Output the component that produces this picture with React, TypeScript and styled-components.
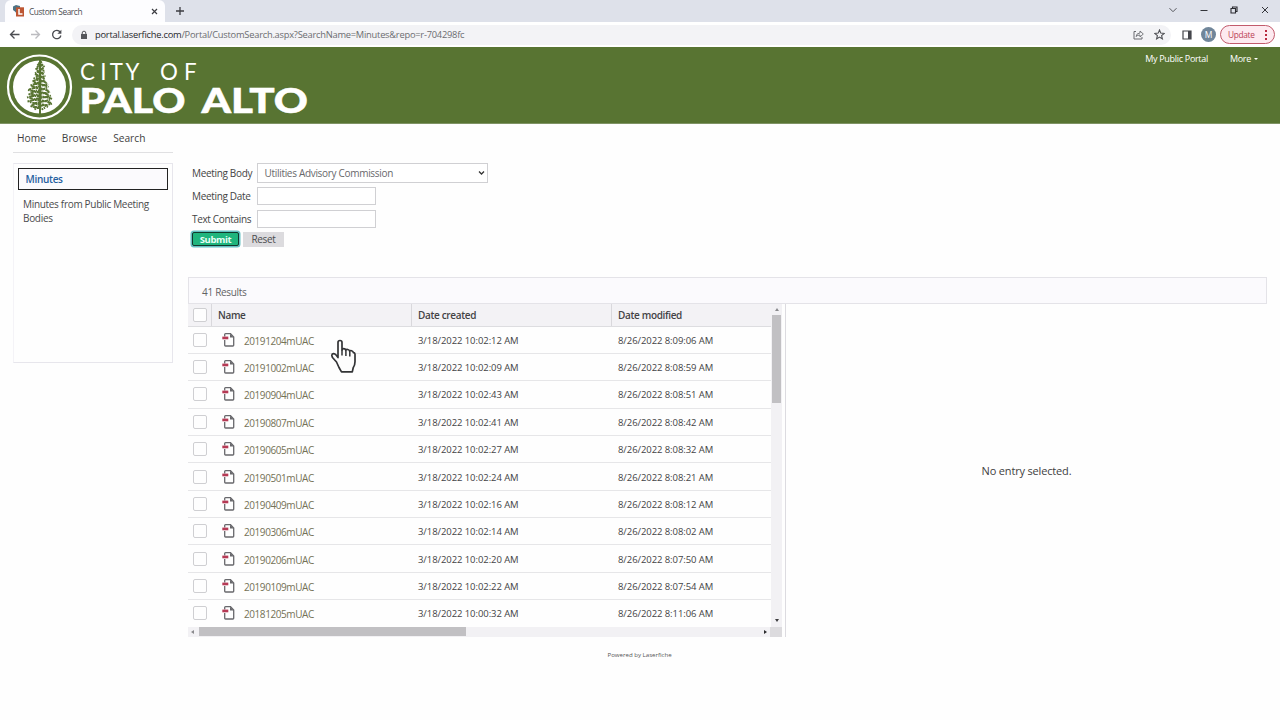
import React from "react";
import styled, { createGlobalStyle } from "styled-components";

const Global = createGlobalStyle`
  * { box-sizing: border-box; }
  body { margin: 0; background: #fefefe; font-family: "Open Sans", sans-serif; color: #444; overflow: hidden; }
  button, input, select { font-family: inherit; margin: 0; }
`;

const Page = styled.div`
  width: 1280px;
  height: 720px;
  display: flex;
  flex-direction: column;
  overflow: hidden;
`;

/* Browser chrome */
const TabStrip = styled.div`
  height: 22px;
  background: #dee1ea;
  display: flex;
  align-items: stretch;
  padding-left: 5px;
`;
const Tab = styled.div`
  width: 160px;
  background: #fdfdff;
  border-radius: 6px 6px 0 0;
  display: flex;
  align-items: center;
  padding: 0 7px 0 8px;
  font-size: 8.3px;
  letter-spacing: -0.4px;
  color: #4c4d52;
  & > span { margin-left: 4px; flex: 1; white-space: nowrap; }
`;
const NewTab = styled.div`
  width: 30px;
  display: flex;
  align-items: center;
  justify-content: center;
`;
const WindowControls = styled.div`
  margin-left: auto;
  display: flex;
  align-items: center;
  gap: 20.6px;
  padding: 0 10px 3px 0;
`;
const Toolbar = styled.div`
  height: 25px;
  background: #fff;
  display: flex;
  align-items: center;
  padding-left: 9px;
`;
const NavIcons = styled.div`
  display: flex;
  gap: 10px;
  width: 63px;
`;
const Omnibox = styled.div`
  width: 1099px;
  height: 20px;
  border-radius: 10px;
  background: #f3f3f6;
  display: flex;
  align-items: center;
  padding: 0 6px 0 8px;
`;
const Url = styled.div`
  margin-left: 7px;
  flex: 1;
  font-size: 9.3px;
  letter-spacing: -0.23px;
  color: #6b6c70;
  white-space: nowrap;
  b { font-weight: 400; color: #26272b; }
`;
const OmniIcons = styled.div`
  display: flex;
  align-items: center;
  gap: 10px;
`;
const ToolbarEnd = styled.div`
  display: flex;
  align-items: center;
  margin-left: 11px;
`;
const Avatar = styled.div`
  width: 15px;
  height: 15px;
  margin-left: 9px;
  border-radius: 50%;
  background: #70869a;
  color: #fff;
  font-size: 8.5px;
  line-height: 15px;
  text-align: center;
`;
const Update = styled.div`
  width: 55px;
  height: 19px;
  margin-left: 4px;
  border: 1px solid #c25a6c;
  border-radius: 10px;
  background: #fdeaf0;
  color: #bb3f55;
  font-size: 8.3px;
  letter-spacing: -0.3px;
  display: flex;
  align-items: center;
  justify-content: space-between;
  padding: 0 7px;
`;

/* Portal header */
const Banner = styled.header`
  height: 77px;
  background: #587432;
  border-bottom: 1px solid #7f9364;
  display: flex;
  justify-content: space-between;
`;
const BannerLinks = styled.div`
  display: flex;
  gap: 22px;
  padding: 5px 22px 0 0;
  font-size: 9px;
  letter-spacing: -0.3px;
  line-height: 13px;
  color: #fff;
`;
const MoreLink = styled.span`
  display: flex;
  align-items: center;
  gap: 3px;
  &::after {
    content: "";
    border: 2.5px solid transparent;
    border-top-color: #fff;
    border-bottom: 0;
  }
`;

const Body = styled.div`
  flex: 1;
  display: flex;
  height: 516px;
`;
const Side = styled.aside`
  width: 188px;
  padding-left: 13px;
`;
const SiteNav = styled.nav`
  width: 160px;
  height: 29px;
  border-bottom: 1px solid #e0e0e2;
  display: flex;
  gap: 16px;
  padding: 6px 0 0 4px;
  font-size: 10.2px;
  line-height: 17px;
  color: #3e3e40;
`;
const SearchPanel = styled.div`
  width: 160px;
  height: 200px;
  margin-top: 10px;
  border: 1px solid #e7e6ec;
  border-left-color: #f4f3f7;
  padding: 4px;
`;
const ActiveSearch = styled.div`
  width: 150px;
  height: 22px;
  border: 1px solid #222;
  background: #fbfafd;
  color: #2660a0;
  font-size: 10px;
  font-weight: 600;
  line-height: 21px;
  padding-left: 6.5px;
  letter-spacing: -0.3px;
`;
const SearchNote = styled.p`
  margin: 7px 0 0 5px;
  width: 140px;
  font-size: 10px;
  letter-spacing: -0.31px;
  line-height: 14px;
  color: #4b4b4d;
`;

const Main = styled.main`
  width: 1079px;
  display: flex;
  flex-direction: column;
`;
const Form = styled.div`
  height: 153px;
  padding: 38px 0 0 4px;
`;
const Field = styled.label<{ $h: number }>`
  display: flex;
  align-items: center;
  height: ${(p) => p.$h}px;
  font-size: 10px;
  letter-spacing: -0.33px;
  & > span { width: 64.5px; white-space: nowrap; }
`;
const SelectBox = styled.div`
  width: 231px;
  height: 20px;
  border: 1px solid #d0d0d3;
  background: #fff;
  color: #68686b;
  padding: 0 2px 0 7px;
  font-size: 10px;
  letter-spacing: -0.31px;
  display: flex;
  align-items: center;
  justify-content: space-between;
`;
const TextInput = styled.input`
  width: 119px;
  height: 18px;
  border: 1px solid #d0d0d3;
  background: #fff;
  padding: 0;
`;
const Actions = styled.div`
  display: flex;
  gap: 4px;
  margin: 3px 0 0 0;
`;
const SubmitButton = styled.button`
  width: 47px;
  height: 14px;
  padding: 0;
  border: 1.5px solid #12382c;
  border-radius: 2px;
  background: #1fb57d;
  color: #e9fff6;
  font-size: 9.5px;
  letter-spacing: -0.35px;
  font-weight: 700;
  line-height: 11px;
  box-shadow: 0 0 0 1.5px #65bfc2;
`;
const ResetButton = styled.button`
  width: 41px;
  height: 15px;
  padding: 0;
  border: 0;
  background: #dcdbde;
  color: #4c4c4e;
  font-size: 10px;
  letter-spacing: -0.3px;
  line-height: 13px;
`;
const ResultsBar = styled.div`
  height: 27px;
  border: 1px solid #e4e3e8;
  background: #fbfafd;
  padding-left: 13px;
  font-size: 10px;
  letter-spacing: -0.3px;
  line-height: 28px;
  color: #626265;
`;
const Split = styled.div`
  display: flex;
  height: 333px;
`;
const Listing = styled.section`
  width: 598px;
  border-right: 1px solid #dcdbe0;
`;
const ListingView = styled.div`
  display: flex;
  height: 323px;
`;
const Grid = styled.div`
  width: 583px;
  overflow: hidden;
`;
const Row = styled.div`
  height: 27.36px;
  display: grid;
  grid-template-columns: 23px 200px 200px 160px;
  align-items: center;
  border-bottom: 1px solid #e6e6e8;
  font-size: 9.5px;
  color: #434345;
  letter-spacing: -0.07px;
`;
const HeadRow = styled(Row)`
  height: 22.6px;
  background: #f3f2f5;
  border-bottom: 1px solid #dddde0;
  font-size: 10px;
  font-weight: 600;
  align-items: stretch;
  letter-spacing: -0.35px;
`;
const HeadCell = styled.div`
  box-shadow: inset 1px 0 #d9d8dc;
  padding-left: 7px;
  line-height: 22px;
`;
const CheckCell = styled.div`
  display: flex;
  align-items: center;
  padding-left: 5px;
`;
const Check = styled.div`
  width: 14px;
  height: 14px;
  border: 1px solid #cfcfd2;
  border-radius: 2px;
  background: #fefefe;
`;
const NameCell = styled.div`
  display: flex;
  align-items: center;
  gap: 8.5px;
  padding-left: 10.5px;
  font-size: 10px;
  color: #747256;
  letter-spacing: -0.43px;
  & > span { padding-top: 2px; }
`;
const DateCell = styled.div`
  padding: 1px 0 0 7px;
`;
const VScroll = styled.div`
  width: 11px;
  background: #f2f1f4;
  display: flex;
  flex-direction: column;
  align-items: center;
  padding: 4px 0 5px;
`;
const VThumb = styled.div`
  width: 9px;
  height: 88px;
  margin-top: 4px;
  background: #c1c0c3;
`;
const HScroll = styled.div`
  width: 594px;
  height: 10px;
  background: #f2f1f4;
  display: flex;
  align-items: center;
  padding-left: 3px;
`;
const HThumb = styled.div`
  width: 267px;
  height: 9px;
  margin: -1px 0 0 5px;
  background: #c1c0c3;
`;
const Corner = styled.div`
  width: 12px;
  height: 10px;
  background: #dcdbde;
`;
const Arrow = styled.div<{ $dir: "up" | "down" | "left" | "right" }>`
  width: 0;
  height: 0;
  border: 2.5px solid transparent;
  ${(p) =>
    ({
      up: "border-bottom: 3px solid #8a8a8d; border-top: 0;",
      down: "border-top: 3px solid #3c3c3e; border-bottom: 0; margin-top: auto;",
      left: "border-right: 3px solid #8a8a8d; border-left: 0;",
      right: "border-left: 3px solid #2c2c2e; border-right: 0; margin-left: auto; margin-right: 3px;",
    })[p.$dir]}
`;
const Preview = styled.section`
  flex: 1;
  display: flex;
  align-items: center;
  justify-content: center;
  font-size: 11px;
  letter-spacing: -0.17px;
  color: #3f3f41;
`;
const Footer = styled.footer`
  height: 80px;
  padding: 13px 0 0 419.5px;
  font-size: 6.1px;
  line-height: 9px;
  color: #555;
  white-space: nowrap;
`;
const Pointer = styled.svg`
  position: absolute;
  left: 329px;
  top: 338px;
`;

const Favicon = () => (
  <svg width="12" height="12" viewBox="0 0 12 12">
    <path d="M0 1.500 3 0l4 1v3H4v5L2 6.500 0 5z" fill="#4d7284" />
    <rect x="3" y="2.300" width="8" height="9.200" fill="#bd5633" />
    <path d="M6 4v5h3.500" fill="none" stroke="#fff" strokeWidth="1.500" />
  </svg>
);

/* Reach of the redwood's boughs at successive heights: [y, left, right] */
const TIERS = [
  [62, 1, 1.5], [64, 2.5, 3], [66, 3, 4.5], [68, 4.5, 3.5], [70, 3, 4], [72, 5, 4.5],
  [74, 5, 4], [76, 4, 5.5], [78, 6.5, 4.5], [80, 7.5, 5], [82, 6, 6.5], [84, 9.5, 8],
  [86, 8.5, 8.5], [88, 11, 7], [90, 12, 8.5], [92, 9.5, 10], [94, 11.5, 8.5], [96, 13, 11],
  [98, 10.5, 12.5], [100, 12.5, 10], [102, 10, 11], [104, 8.5, 12], [106, 9.5, 8], [108, 5.5, 5],
];

const Tree = () => (
  <g fill="none" stroke="#587432">
    <path d="M40 60v55" strokeWidth="2" />
    {TIERS.map(([y, l, r], i) => (
      <path
        key={y}
        d={`M${40 - l} ${y + (i % 2 ? 1.5 : 0)}l${l * 0.45} ${i % 2 ? -1.4 : 1.2}L40 ${y}l${r * 0.5} ${i % 2 ? 1.2 : -1}L${40 + r} ${y + (i % 2 ? -0.4 : 1)}`}
        strokeWidth="2"
        strokeDasharray={["3.4 0.7 2.1 0.4", "2.2 0.5 4 0.6", "1.6 0.7 5 0.5"][i % 3]}
      />
    ))}
  </g>
);

const Logo = () => (
  <svg width="320" height="76" viewBox="0 47 320 76">
    <circle cx="39.500" cy="87" r="31.500" fill="none" stroke="#fff" strokeWidth="2.200" />
    <circle cx="39.500" cy="87" r="26.500" fill="#fff" />
    <Tree />
    <text x="80 100.300 109.800 125.500 145 160 184" y="79.700" fontFamily="Lato" fontSize="22.300" fill="#fff">
      CITY OF
    </text>
    <g fontFamily="Lato" fontWeight="900" fontSize="34.500" fill="#fff" stroke="#fff" strokeWidth="0.500">
      <text x="79.500" y="113" textLength="106" lengthAdjust="spacingAndGlyphs">
        PALO
      </text>
      <text x="201.500" y="113" textLength="106.500" lengthAdjust="spacingAndGlyphs">
        ALTO
      </text>
    </g>
  </svg>
);

const DocIcon = () => (
  <svg width="14" height="14" viewBox="0 0 14 14">
    <path d="M2.700 3.500V1.500q0-.8.8-.8H8.500L11.700 4v8.200q0 .8-.8.8H3.500q-.8 0-.8-.8V7" fill="none" stroke="#68686c" strokeWidth="1.300" />
    <path d="M8 .7V4.500h3.700z" fill="#68686c" />
    <path d="M.3 3.600h6v2.700h-6z" fill="#b63a55" />
  </svg>
);

const ROWS = [
  ["20191204mUAC", "3/18/2022 10:02:12 AM", "8/26/2022 8:09:06 AM"],
  ["20191002mUAC", "3/18/2022 10:02:09 AM", "8/26/2022 8:08:59 AM"],
  ["20190904mUAC", "3/18/2022 10:02:43 AM", "8/26/2022 8:08:51 AM"],
  ["20190807mUAC", "3/18/2022 10:02:41 AM", "8/26/2022 8:08:42 AM"],
  ["20190605mUAC", "3/18/2022 10:02:27 AM", "8/26/2022 8:08:32 AM"],
  ["20190501mUAC", "3/18/2022 10:02:24 AM", "8/26/2022 8:08:21 AM"],
  ["20190409mUAC", "3/18/2022 10:02:16 AM", "8/26/2022 8:08:12 AM"],
  ["20190306mUAC", "3/18/2022 10:02:14 AM", "8/26/2022 8:08:02 AM"],
  ["20190206mUAC", "3/18/2022 10:02:20 AM", "8/26/2022 8:07:50 AM"],
  ["20190109mUAC", "3/18/2022 10:02:22 AM", "8/26/2022 8:07:54 AM"],
  ["20181205mUAC", "3/18/2022 10:00:32 AM", "8/26/2022 8:11:06 AM"],
];

export default function App() {
  return (
    <Page>
      <Global />
      <TabStrip>
        <Tab>
          <Favicon />
          <span>Custom Search</span>
          <svg width="7" height="7" viewBox="0 0 7 7">
            <path d="M1 1l5 5M6 1 1 6" stroke="#3c3d42" strokeWidth="1.200" />
          </svg>
        </Tab>
        <NewTab>
          <svg width="8" height="8" viewBox="0 0 8 8">
            <path d="M4 0v8M0 4h8" stroke="#3c3d42" strokeWidth="1.300" />
          </svg>
        </NewTab>
        <WindowControls>
          <svg width="10" height="10" viewBox="0 0 10 10">
            <path d="M1.500 3.200 5 6.700l3.500-3.500" fill="none" stroke="#55565c" />
          </svg>
          <svg width="10" height="10" viewBox="0 0 10 10">
            <path d="M1.500 5.500h7" stroke="#33343a" />
          </svg>
          <svg width="10" height="10" viewBox="0 0 10 10">
            <path d="M2 3.500h4.500V8H2zM3.500 3.500v-1.500H8v4.500H6.500" fill="none" stroke="#2a2b30" strokeWidth="1.100" />
          </svg>
          <svg width="10" height="10" viewBox="0 0 10 10">
            <path d="M2 2l6 6M8 2 2 8" stroke="#33343a" strokeWidth="1" />
          </svg>
        </WindowControls>
      </TabStrip>
      <Toolbar>
        <NavIcons>
          <svg width="11" height="11" viewBox="0 0 11 11">
            <path d="M10.500 5.500H1.500M5.500 1.500l-4 4 4 4" fill="none" stroke="#4c4d52" strokeWidth="1.300" />
          </svg>
          <svg width="11" height="11" viewBox="0 0 11 11">
            <path d="M1 5.500h8.500M5.500 1.500l4 4-4 4" fill="none" stroke="#bcbcc0" strokeWidth="1.300" />
          </svg>
          <svg width="11" height="11" viewBox="0 0 11 11">
            <path d="M9.200 3A4.200 4.200 0 1 0 9.900 6.500" fill="none" stroke="#4c4d52" strokeWidth="1.300" />
            <path d="M10.400 .8v4H6.400z" fill="#4c4d52" />
          </svg>
        </NavIcons>
        <Omnibox>
          <svg width="8" height="10" viewBox="0 0 8 10">
            <path d="M1 4h6v5H1z" fill="#55565b" />
            <path d="M2.200 4.500V3a1.800 1.800 0 0 1 3.600 0v1.500" fill="none" stroke="#55565b" />
          </svg>
          <Url>
            <b>portal.laserfiche.com</b>/Portal/CustomSearch.aspx?SearchName=Minutes&amp;repo=r-704298fc
          </Url>
          <OmniIcons>
            <svg width="11" height="11" viewBox="0 0 11 11">
              <path d="M3 2.500H1v7.500h8V8" fill="none" stroke="#6a6b70" />
              <path d="M3 7.500q.5-3.500 4-3.500V2l3.300 3L7 8V6Q4.500 6 3 7.500z" fill="none" stroke="#6a6b70" strokeWidth=".9" />
            </svg>
            <svg width="11" height="11" viewBox="0 0 11 11">
              <path d="M5.500 1l1.300 3.100 3.400.3-2.600 2.200.8 3.300-2.900-1.800-2.900 1.800.8-3.300L.8 4.400l3.400-.3z" fill="none" stroke="#4f5055" strokeWidth="1.100" />
            </svg>
          </OmniIcons>
        </Omnibox>
        <ToolbarEnd>
          <svg width="10" height="10" viewBox="0 0 10 10">
            <path d="M1 1h8v8H1z" fill="none" stroke="#45464b" strokeWidth="1.200" />
            <path d="M6 1h3v8H6z" fill="#45464b" />
          </svg>
          <Avatar>M</Avatar>
          <Update>
            Update
            <svg width="2" height="10" viewBox="0 0 2 10">
              <path d="M0 0h2v2H0zM0 4h2v2H0zM0 8h2v2H0z" fill="#b8283f" />
            </svg>
          </Update>
        </ToolbarEnd>
      </Toolbar>

      <Banner>
        <Logo />
        <BannerLinks>
          <span>My Public Portal</span>
          <div>
            <MoreLink>More</MoreLink>
          </div>
        </BannerLinks>
      </Banner>

      <Body>
        <Side>
          <SiteNav>
            <span>Home</span>
            <span>Browse</span>
            <span>Search</span>
          </SiteNav>
          <SearchPanel>
            <ActiveSearch>Minutes</ActiveSearch>
            <SearchNote>Minutes from Public Meeting Bodies</SearchNote>
          </SearchPanel>
        </Side>
        <Main>
          <Form>
            <Field $h={21}>
              <span>Meeting Body</span>
              <SelectBox>
                Utilities Advisory Commission
                <svg width="7" height="6" viewBox="0 0 7 6">
                  <path d="M1 1.500 3.500 4 6 1.500" fill="none" stroke="#333" strokeWidth="1.300" />
                </svg>
              </SelectBox>
            </Field>
            <Field $h={25}>
              <span>Meeting Date</span>
              <TextInput />
            </Field>
            <Field $h={21}>
              <span>Text Contains</span>
              <TextInput />
            </Field>
            <Actions>
              <SubmitButton>Submit</SubmitButton>
              <ResetButton>Reset</ResetButton>
            </Actions>
          </Form>
          <ResultsBar>41 Results</ResultsBar>
          <Split>
            <Listing>
              <ListingView>
                <Grid>
                  <HeadRow>
                    <CheckCell>
                      <Check />
                    </CheckCell>
                    <HeadCell>Name</HeadCell>
                    <HeadCell>Date created</HeadCell>
                    <HeadCell>Date modified</HeadCell>
                  </HeadRow>
                  {ROWS.map(([name, created, modified]) => (
                    <Row key={name}>
                      <CheckCell>
                        <Check />
                      </CheckCell>
                      <NameCell>
                        <DocIcon />
                        <span>{name}</span>
                      </NameCell>
                      <DateCell>{created}</DateCell>
                      <DateCell>{modified}</DateCell>
                    </Row>
                  ))}
                </Grid>
                <VScroll>
                  <Arrow $dir="up" />
                  <VThumb />
                  <Arrow $dir="down" />
                </VScroll>
              </ListingView>
              <HScroll>
                <Arrow $dir="left" />
                <HThumb />
                <Arrow $dir="right" />
                <Corner />
              </HScroll>
            </Listing>
            <Preview>No entry selected.</Preview>
          </Split>
          <Footer>Powered by Laserfiche</Footer>
        </Main>
      </Body>
      <Pointer width="28" height="38" viewBox="0 0 28 38">
        <path
          d="M9 19.500V4.500q0-2 2-2t2 2v7.500q0-1.300 1.700-1.300t2.100 1.600q.3-1 1.900-.8t2 1.700q.4-.8 1.900-.4t1.900 1.900q1.200-.1 1.500 1.500v7.500q0 3.500-1.800 6l-.9 4.200H12.500L10 29.500 7.500 24 3.500 19.500q-1.200-2.400-.4-3.300 2-1.400 4 .8z"
          fill="#fdfdfd" stroke="#333436" strokeWidth="1.700" strokeLinejoin="round"
        />
        <path d="M13 12v5.500M16.900 12.500V18M20.800 13.500V18.500" stroke="#333436" strokeWidth="1.500" fill="none" />
      </Pointer>
    </Page>
  );
}
